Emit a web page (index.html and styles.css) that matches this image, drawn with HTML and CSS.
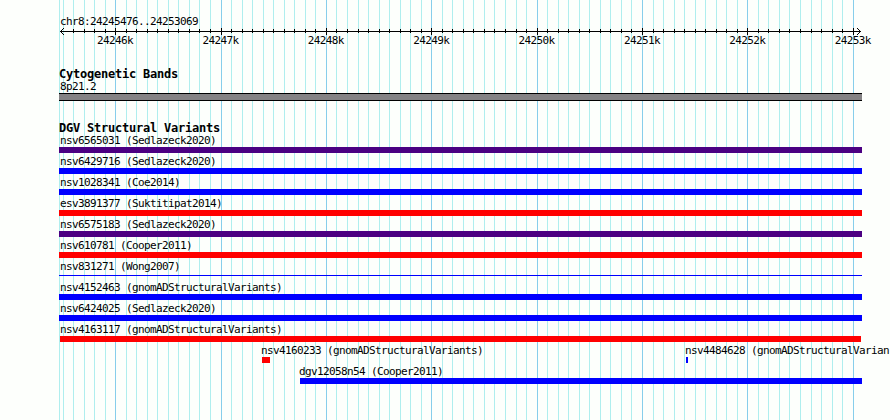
FILE: index.html
```html
<!DOCTYPE html>
<html lang="en">
<head>
    <meta charset="UTF-8">
    <title>chr8:24245476..24253069</title>
    <link rel="stylesheet" href="styles.css">
</head>
<body>
    <div class="browser">
        <svg class="grid" id="grid" width="890" height="420" shape-rendering="crispEdges"></svg>

        <div class="position">chr8:24245476..24253069</div>
        <svg class="ruler" id="ruler" width="890" height="8" shape-rendering="crispEdges">
            <path class="axis" d="M60 3.5H861"/>
            <path class="arrow" d="M60 3h1v1h-1zM61 2h1v3h-1zM62 1h1v1h-1zM62 5h1v1h-1zM63 0h1v1h-1zM63 6h1v1h-1z"/>
            <path class="arrow" d="M860 3h1v1h-1zM859 2h1v3h-1zM858 1h1v1h-1zM858 5h1v1h-1zM857 0h1v1h-1zM857 6h1v1h-1z"/>
        </svg>
        <div class="scale">
            <span>24246k</span>
            <span>24247k</span>
            <span>24248k</span>
            <span>24249k</span>
            <span>24250k</span>
            <span>24251k</span>
            <span>24252k</span>
            <span>24253k</span>
        </div>

        <h2 class="bands-title">Cytogenetic Bands</h2>
        <div class="band-label">8p21.2</div>
        <div class="band"></div>

        <h2 class="variants-title">DGV Structural Variants</h2>
        <div id="variants"></div>
    </div>

    <script>
        const svgNs = 'http://www.w3.org/2000/svg';
        const pxPerTick = 10.536;  // 100 bp
        const originX = 115.69;    // position of 24246k

        // each row can hold several variants: name, start, end, type
        const rows = [
            [['nsv6565031 (Sedlazeck2020)', 59, 862, 'complex']],
            [['nsv6429716 (Sedlazeck2020)', 59, 862, 'gain']],
            [['nsv1028341 (Coe2014)', 59, 862, 'gain']],
            [['esv3891377 (Suktitipat2014)', 59, 862, 'loss']],
            [['nsv6575183 (Sedlazeck2020)', 59, 862, 'complex']],
            [['nsv610781 (Cooper2011)', 59, 862, 'loss']],
            [['nsv831271 (Wong2007)', 59, 862, 'gain thin']],
            [['nsv4152463 (gnomADStructuralVariants)', 59, 862, 'gain']],
            [['nsv6424025 (Sedlazeck2020)', 59, 862, 'gain']],
            [['nsv4163117 (gnomADStructuralVariants)', 60, 861, 'loss']],
            [
                ['nsv4160233 (gnomADStructuralVariants)', 262, 270, 'loss'],
                ['nsv4484628 (gnomADStructuralVarian', 686, 688, 'gain']
            ],
            [['dgv12058n54 (Cooper2011)', 300, 862, 'gain']]
        ];

        function addRect(parent, x, y, height, className) {
            const rect = document.createElementNS(svgNs, 'rect');
            rect.setAttribute('x', x);
            rect.setAttribute('y', y);
            rect.setAttribute('width', 1);
            rect.setAttribute('height', height);
            rect.setAttribute('class', className);
            parent.appendChild(rect);
        }

        function drawGrid() {
            const grid = document.getElementById('grid');
            const ruler = document.getElementById('ruler');
            addRect(grid, 59, 0, 420, 'minor');
            for (let i = -5; i <= 70; i++) {
                const x = Math.floor(originX + i * pxPerTick);
                const major = i % 10 === 0;
                addRect(grid, x, 0, 420, major ? 'major' : 'minor');
                // the first tick is covered by the arrow head
                if (i > -5) {
                    addRect(ruler, x, major ? 0 : 1, major ? 7 : 4, 'tick');
                }
            }
        }

        function drawVariants() {
            const container = document.getElementById('variants');
            rows.forEach(row => {
                const line = document.createElement('div');
                line.className = 'row';
                let cursor = 0;
                row.forEach(([name, start, end, type]) => {
                    const variant = document.createElement('div');
                    // labels never start left of the panel edge
                    const labelClass = start === 59 ? 'label inset' : start === 60 ? 'label flush' : 'label';
                    variant.className = 'variant';
                    variant.style.marginLeft = `${start - cursor}px`;
                    variant.style.width = `${end - start}px`;
                    variant.innerHTML = `
                        <div class="${labelClass}">${name}</div>
                        <div class="bar ${type}"></div>
                    `;
                    line.appendChild(variant);
                    cursor = end;
                });
                container.appendChild(line);
            });
        }

        drawGrid();
        drawVariants();
    </script>
</body>
</html>
```

FILE: styles.css
```css
body {
    margin: 0;
    background-color: #fdfffc;
    overflow: hidden;
}

.browser {
    position: relative;
    width: 890px;
    height: 420px;
    overflow: hidden;
    font-family: "DejaVu Sans Mono", monospace;
    font-size: 11px;
    letter-spacing: -0.623px;
    line-height: 13px;
    color: #000;
    white-space: nowrap;
}

/* Grid lines run behind every track */
.grid {
    position: absolute;
    top: 0;
    left: 0;
    z-index: -1;
}

.minor {
    fill: #afeeee;
}

.major {
    fill: #87ceeb;
}

.position {
    padding: 15px 0 0 60px;
}

/* Ruler */
.ruler {
    display: block;
}

.axis {
    stroke: #000;
}

.arrow,
.tick {
    fill: #000;
}

.scale {
    display: flex;
    gap: 69.4px;
    padding-left: 97px;
    margin-top: -2px;
}

.scale span {
    width: 36px;
}

/* Tracks */
h2 {
    margin: 0;
    padding-left: 59px;
    font-size: 12px;
    letter-spacing: -0.225px;
    line-height: 13px;
}

.bands-title {
    margin-top: 21px;
    height: 12px;
}

.band-label {
    height: 13px;
    padding-left: 60px;
}

.band {
    box-sizing: border-box;
    width: 803px;
    height: 8px;
    margin-left: 59px;
    background-color: #848284;
    border-top: 1px solid #000;
    border-bottom: 1px solid #000;
}

.variants-title {
    margin-top: 21px;
    height: 12px;
}

.row {
    display: flex;
    height: 21px;
}

.variant {
    flex: none;
}

.label {
    height: 13px;
    margin-left: -1px;
}

.label.inset {
    margin-left: 1px;
}

.label.flush {
    margin-left: 0;
}

.bar {
    height: 6px;
}

.bar.thin {
    height: 1px;
    margin-top: 2px;
}

.gain {
    background-color: #0000ff;
}

.loss {
    background-color: #ff0000;
}

.complex {
    background-color: #4b0082;
}
```
